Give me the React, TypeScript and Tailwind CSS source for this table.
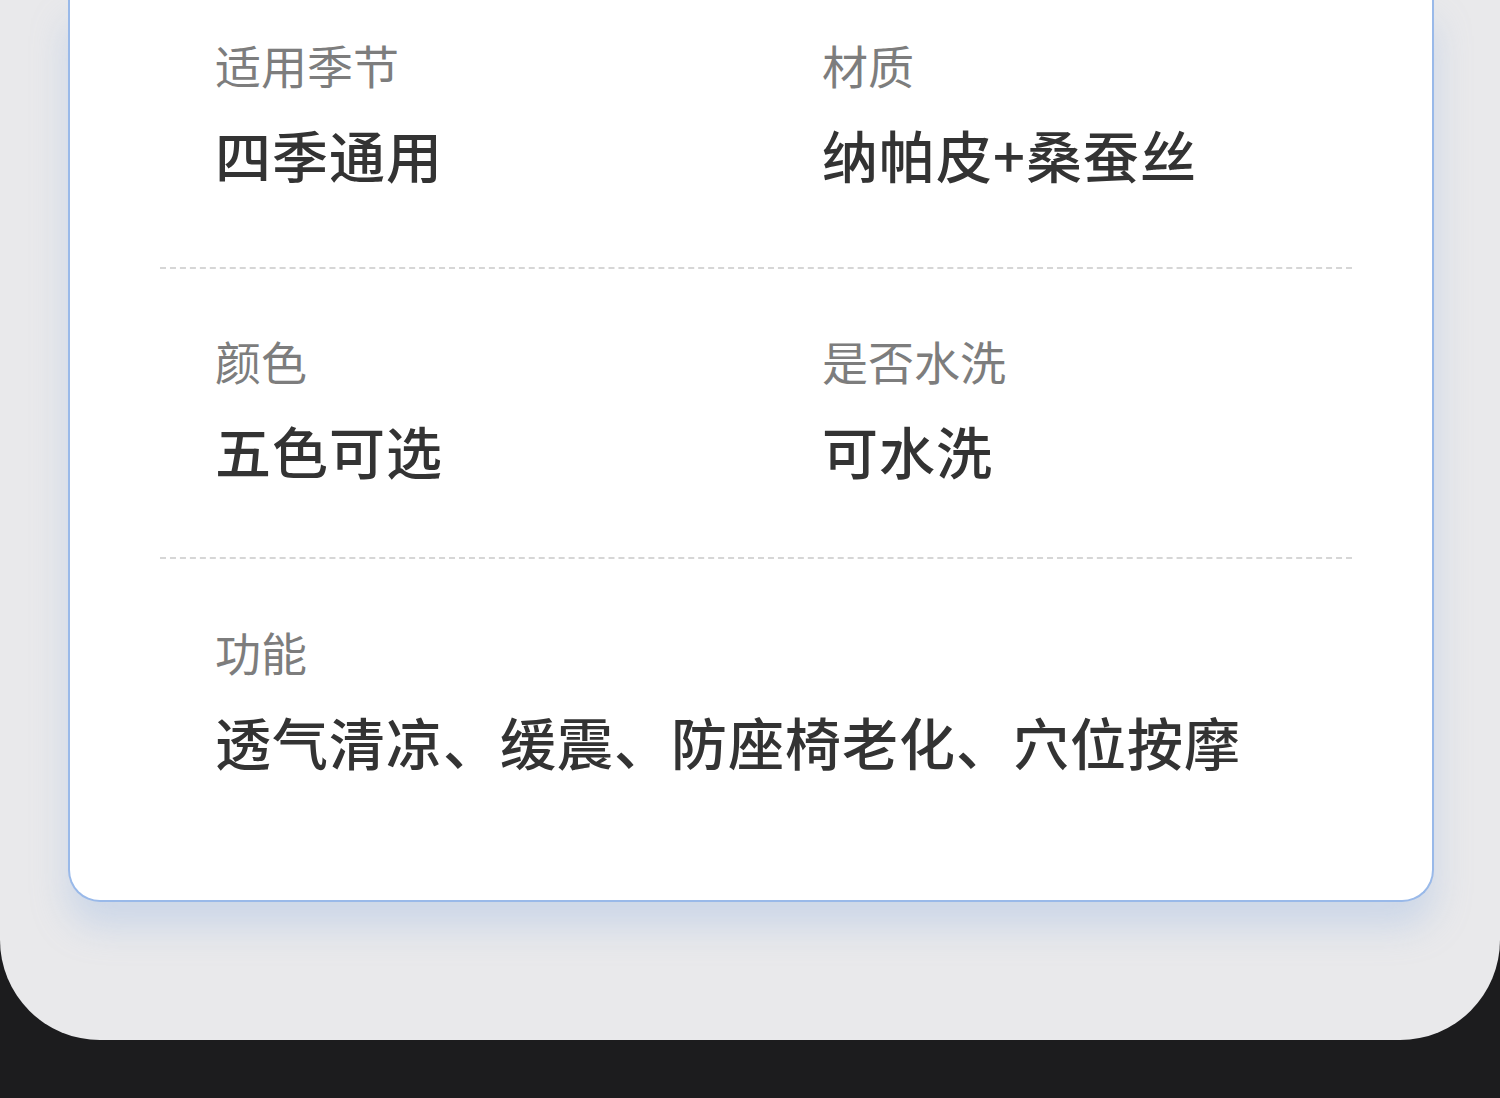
const specs = [
    [
        { label: '适用季节', value: '四季通用' },
        { label: '材质', value: '纳帕皮+桑蚕丝' },
    ],
    [
        { label: '颜色', value: '五色可选' },
        { label: '是否水洗', value: '可水洗' },
    ],
];

function Spec({ label, value }: { label: string; value: string }) {
    return (
        <div className="flex flex-col">
            <div className="text-[46px] leading-[46px] text-[#7d7d7d]">{label}</div>
            <div className="mt-[39px] text-[56px] leading-[56px] tracking-[1px] font-medium text-[#333333] whitespace-nowrap">{value}</div>
        </div>
    );
}

export default function App() {
    return (
        <div
            className="w-[1500px] h-[1098px] bg-[#1c1c1e] overflow-hidden"
            style={{ fontFamily: '"Noto Sans CJK SC", "Noto Sans", sans-serif' }}
        >
            <div className="h-[1040px] bg-[#e9e9eb] rounded-b-[100px] pl-[68px] pr-[66px]">
                <div className="h-[902px] bg-white border-2 border-t-0 border-[#99b9e9] rounded-b-[32px] shadow-[0_24px_36px_rgba(150,180,225,0.35)] pl-[90px] pr-[80px]">
                    <div className="pt-[41px] pb-[85px] border-b-2 border-dashed border-[#d6d6d6]">
                        <div className="grid grid-cols-[607px_1fr] pl-[55px]">
                            {specs[0].map((s) => (
                                <Spec key={s.label} label={s.label} value={s.value} />
                            ))}
                        </div>
                    </div>
                    <div className="pt-[68px] pb-[79px] border-b-2 border-dashed border-[#d6d6d6]">
                        <div className="grid grid-cols-[607px_1fr] pl-[55px]">
                            {specs[1].map((s) => (
                                <Spec key={s.label} label={s.label} value={s.value} />
                            ))}
                        </div>
                    </div>
                    <div className="pt-[69px] pl-[55px]">
                        <Spec label="功能" value="透气清凉、缓震、防座椅老化、穴位按摩" />
                    </div>
                </div>
            </div>
        </div>
    );
}
